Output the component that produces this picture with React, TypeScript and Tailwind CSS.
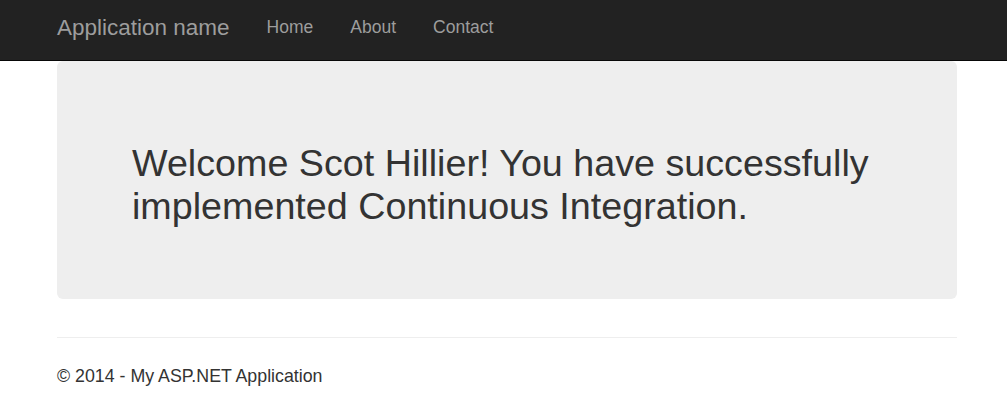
export default function App() {
  return (
    <div className="min-h-screen bg-white text-[#333]" style={{ fontFamily: '"Liberation Sans", Arial, sans-serif' }}>
      <header className="h-[61px] bg-[#222] border-b border-[#080808]">
        <nav className="ml-[57px] w-[900px] h-full flex items-center pb-[4px]">
          <a href="#" className="text-[22.5px] text-[#9d9d9d] mr-[37px] leading-none">
            Application name
          </a>
          <ul className="flex items-center gap-[37px] text-[17.5px] text-[#9d9d9d] leading-none">
            <li><a href="#">Home</a></li>
            <li><a href="#">About</a></li>
            <li><a href="#">Contact</a></li>
          </ul>
        </nav>
      </header>

      <main className="ml-[57px] w-[900px]">
        <div className="bg-[#eee] rounded-[6px] h-[238px] px-[75px] pt-[10px] flex items-center">
          <h1 className="text-[37.7px] leading-[43px] text-[#333]">
            Welcome Scot Hillier! You have successfully implemented Continuous Integration.
          </h1>
        </div>

        <hr className="mt-[38px] border-t border-[#eee]" />
        <footer className="pt-[25px]">
          <p className="text-[17.8px]">© 2014 - My ASP.NET Application</p>
        </footer>
      </main>
    </div>
  )
}
